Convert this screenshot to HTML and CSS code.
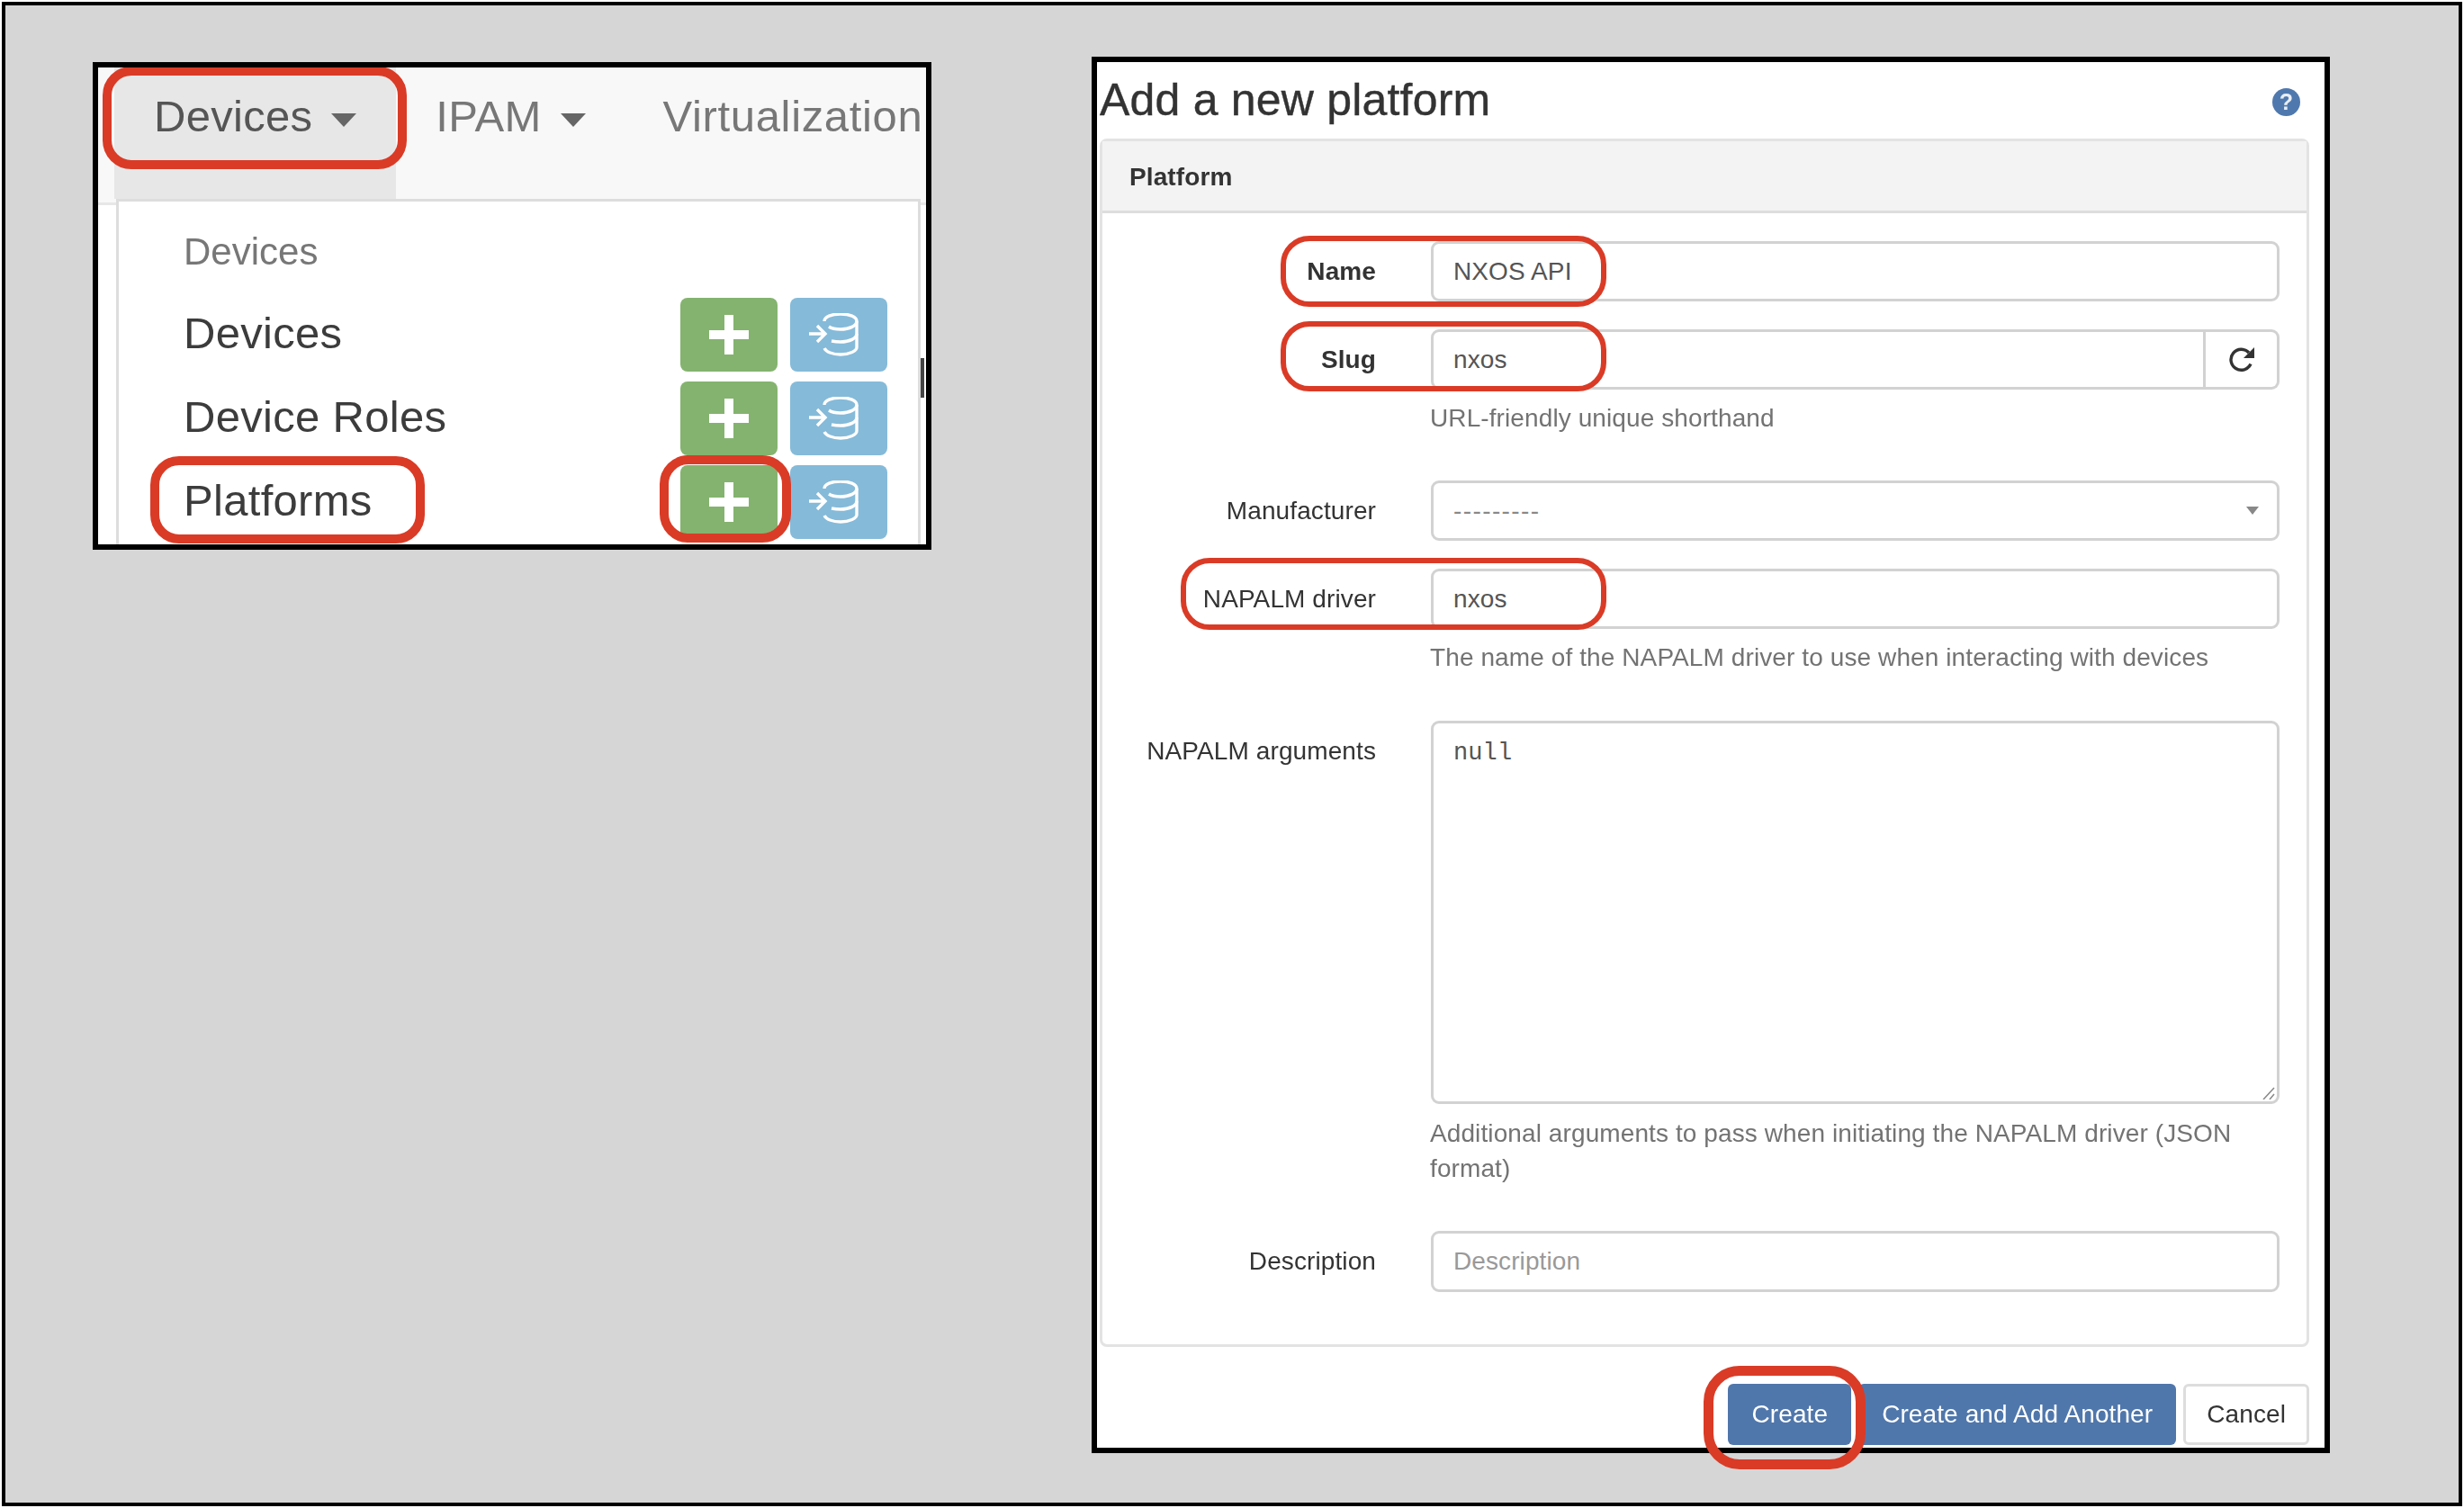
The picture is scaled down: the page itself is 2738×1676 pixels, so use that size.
FILE: index.html
```html
<!DOCTYPE html>
<html>
<head>
  <title>Add a new platform</title>
  <link rel="stylesheet" href="styles.css">
</head>
<body>
  <div class="frame">

    <!-- left shot: nav menu -->
    <div class="shot shot-nav">
      <div class="navbar">
        <div class="nav-item active">Devices <span class="caret"></span></div>
        <div class="nav-item">IPAM <span class="caret"></span></div>
        <div class="nav-item nav-virt">Virtualization</div>
      </div>
      <div class="menu">
        <div class="menu-header">Devices</div>
        <div class="menu-row">
          <span class="menu-label">Devices</span>
          <div class="menu-btns">
            <span class="btn-add"><svg width="44" height="44" viewBox="0 0 44 44"><path d="M17 0h10v17h17v10H27v17H17V27H0V17h17z" fill="#fff"/></svg></span>
            <span class="btn-import"><svg width="56" height="48" viewBox="0 0 56 48" fill="none" stroke="#fff" stroke-width="3.4"><path d="M17 9c0-5 8-8 18-8s18 3 18 8-8 9-18 9c-5 0-10-1-13-3"/><path d="M53 9v29c0 4-8 8-18 8-9 0-16-3-18-7"/><path d="M53 23c0 5-8 9-18 9-4 0-7-.4-10-1"/><path d="M0 23h18M9 14l9 9-9 9"/></svg></span>
          </div>
        </div>
        <div class="menu-row">
          <span class="menu-label">Device Roles</span>
          <div class="menu-btns">
            <span class="btn-add"><svg width="44" height="44" viewBox="0 0 44 44"><path d="M17 0h10v17h17v10H27v17H17V27H0V17h17z" fill="#fff"/></svg></span>
            <span class="btn-import"><svg width="56" height="48" viewBox="0 0 56 48" fill="none" stroke="#fff" stroke-width="3.4"><path d="M17 9c0-5 8-8 18-8s18 3 18 8-8 9-18 9c-5 0-10-1-13-3"/><path d="M53 9v29c0 4-8 8-18 8-9 0-16-3-18-7"/><path d="M53 23c0 5-8 9-18 9-4 0-7-.4-10-1"/><path d="M0 23h18M9 14l9 9-9 9"/></svg></span>
          </div>
        </div>
        <div class="menu-row">
          <span class="menu-label">Platforms</span>
          <div class="menu-btns">
            <span class="btn-add"><svg width="44" height="44" viewBox="0 0 44 44"><path d="M17 0h10v17h17v10H27v17H17V27H0V17h17z" fill="#fff"/></svg></span>
            <span class="btn-import"><svg width="56" height="48" viewBox="0 0 56 48" fill="none" stroke="#fff" stroke-width="3.4"><path d="M17 9c0-5 8-8 18-8s18 3 18 8-8 9-18 9c-5 0-10-1-13-3"/><path d="M53 9v29c0 4-8 8-18 8-9 0-16-3-18-7"/><path d="M53 23c0 5-8 9-18 9-4 0-7-.4-10-1"/><path d="M0 23h18M9 14l9 9-9 9"/></svg></span>
          </div>
        </div>
      </div>
      <div class="sliver"></div>
      <div class="ring ring-devices"></div>
      <div class="ring ring-platforms"></div>
      <div class="ring ring-plus"></div>
    </div>

    <!-- right shot: the form -->
    <div class="shot shot-form">
      <div class="title-row">
        <h1>Add a new platform</h1>
        <span class="help-icon">?</span>
      </div>

      <div class="card">
        <div class="card-header">Platform</div>
        <div class="card-body">
          <div class="form-row row-name">
            <div class="label strong">Name</div>
            <div class="control">NXOS API</div>
          </div>
          <div class="form-row row-slug">
            <div class="label strong">Slug</div>
            <div class="input-group">
              <div class="control">nxos</div>
              <div class="group-btn">
                <svg width="30" height="30" viewBox="0 0 30 30" fill="none"><path d="M25 19.5A11.5 11.5 0 1 1 23 7" stroke="#333" stroke-width="3.4"/><path d="M29 1v12H17z" fill="#333"/></svg>
              </div>
            </div>
            <div class="help-text slug-help">URL-friendly unique shorthand</div>
          </div>
          <div class="form-row row-manu">
            <div class="label">Manufacturer</div>
            <div class="control select"><span class="muted">---------</span><span class="select-caret"></span></div>
          </div>
          <div class="form-row row-driver">
            <div class="label">NAPALM driver</div>
            <div class="control">nxos</div>
            <div class="help-text driver-help">The name of the NAPALM driver to use when interacting with devices</div>
          </div>
          <div class="form-row row-args">
            <div class="label">NAPALM arguments</div>
            <div class="control textarea">null
              <svg class="grip" width="14" height="14" viewBox="0 0 14 14" stroke="#888" stroke-width="1.5"><path d="M1 14L13 1M8 14l5-6"/></svg>
            </div>
            <div class="help-text args-help">Additional arguments to pass when initiating the NAPALM driver (JSON format)</div>
          </div>
          <div class="form-row">
            <div class="label">Description</div>
            <div class="control placeholder">Description</div>
          </div>
        </div>
      </div>

      <div class="form-buttons">
        <span class="btn btn-primary">Create</span>
        <span class="btn btn-primary">Create and Add Another</span>
        <span class="btn btn-default">Cancel</span>
      </div>

      <div class="ring ring-name"></div>
      <div class="ring ring-slug"></div>
      <div class="ring ring-driver"></div>
      <div class="ring ring-create"></div>
    </div>

  </div>
</body>
</html>
```

FILE: styles.css
```css
* {
  box-sizing: border-box;
}

body {
  margin: 0;
  background: #fff;
  font-family: "Liberation Sans", Arial, sans-serif;
  color: #333;
}

.frame {
  display: flex;
  align-items: flex-start;
  width: 2734px;
  height: 1672px;
  margin: 2px;
  padding: 57px 0 0 97px;
  border: 4px solid #000;
  background: #d6d6d6;
}

.shot {
  position: relative;
  border: 6px solid #000;
  background: #fff;
}

/* left shot */
.shot-nav {
  width: 932px;
  height: 542px;
  margin-top: 6px;
  overflow: hidden;
}

.navbar {
  display: flex;
  height: 153px;
  padding-left: 18px;
  background: #f8f8f8;
  border-bottom: 3px solid #e7e7e7;
  font-size: 49px;
  letter-spacing: .3px;
  color: #777;
  white-space: nowrap;
  filter: blur(.7px);
}

.nav-item {
  height: 146px;
  padding: 26px 43px 0 44px;
  line-height: 56px;
}

.nav-item.active {
  padding-right: 44px;
  background: #e7e7e7;
  color: #555;
}

.nav-virt {
  padding-left: 43px;
  padding-right: 0;
  letter-spacing: .65px;
}

.caret {
  display: inline-block;
  margin-left: 7px;
  vertical-align: middle;
  border-top: 15px solid #666;
  border-left: 14px solid transparent;
  border-right: 14px solid transparent;
}

.menu {
  position: absolute;
  top: 146px;
  left: 20px;
  right: 6px;
  height: 420px;
  padding: 0 34px 0 72px;
  background: #fff;
  border: 3px solid #ddd;
  filter: blur(.7px);
}

.menu-header {
  margin: 31px 0 20px;
  font-size: 42px;
  line-height: 50px;
  color: #777;
}

.menu-row {
  display: flex;
  justify-content: space-between;
  align-items: center;
  height: 93px;
  font-size: 49px;
  letter-spacing: .3px;
}

.menu-label {
  padding-bottom: 4px;
  color: #3c3c3c;
}

.menu-btns {
  display: flex;
  gap: 14px;
}

.btn-add,
.btn-import {
  display: flex;
  justify-content: center;
  align-items: center;
  width: 108px;
  height: 82px;
  border-radius: 8px;
}

.btn-add {
  background: #84b36f;
}

.btn-import {
  background: #85bad9;
}

.btn-import svg {
  margin-right: 10px;
}

.sliver {
  position: absolute;
  top: 323px;
  right: 2px;
  width: 4px;
  height: 44px;
  background: #444;
}

/* red markers */
.ring {
  position: absolute;
  border: 6px solid #da3b26;
  border-radius: 32px;
}

.ring-devices {
  top: -1px;
  left: 5px;
  width: 338px;
  height: 114px;
  border-width: 10px;
}

.ring-platforms {
  top: 432px;
  left: 58px;
  width: 305px;
  height: 97px;
  border-width: 10px;
}

.ring-plus {
  top: 431px;
  left: 624px;
  width: 146px;
  height: 97px;
  border-width: 10px;
}

.ring-name {
  top: 193px;
  left: 204px;
  width: 362px;
  height: 79px;
}

.ring-slug {
  top: 288px;
  left: 204px;
  width: 362px;
  height: 78px;
}

.ring-driver {
  top: 551px;
  left: 93px;
  width: 473px;
  height: 80px;
}

.ring-create {
  top: 1449px;
  left: 674px;
  width: 180px;
  height: 115px;
  border-width: 11px;
  border-radius: 40px;
}

/* right shot */
.shot-form {
  width: 1376px;
  height: 1552px;
  margin-left: 178px;
  font-size: 28px;
  letter-spacing: .1px;
}

.title-row {
  display: flex;
  justify-content: space-between;
  align-items: center;
  height: 85px;
  padding: 0 27px 0 3px;
  filter: blur(.4px);
}

h1 {
  margin: 0;
  font-size: 50px;
  font-weight: 400;
  letter-spacing: .2px;
  line-height: 83px;
  -webkit-text-stroke: .4px #333;
}

.help-icon {
  width: 31px;
  height: 31px;
  margin-top: 4px;
  border-radius: 50%;
  background: #4f79ae;
  color: #e8eef6;
  font-size: 25px;
  font-weight: 700;
  line-height: 31px;
  text-align: center;
}

.card {
  width: 1344px;
  height: 1343px;
  margin-left: 3px;
  border: 3px solid #e3e3e3;
  border-radius: 8px;
  filter: blur(.4px);
}

.card-header {
  height: 80px;
  padding: 3px 0 0 30px;
  background: #f3f3f3;
  border-bottom: 3px solid #ddd;
  font-weight: 700;
  line-height: 74px;
}

.card-body {
  padding-top: 31px;
}

.form-row {
  display: grid;
  grid-template-columns: 304px 943px;
  column-gap: 61px;
}

.row-name,
.row-manu {
  margin-bottom: 31px;
}

.row-slug {
  margin-bottom: 50px;
}

.row-driver {
  margin-bottom: 51px;
}

.row-args {
  margin-bottom: 50px;
}

.label {
  height: 67px;
  line-height: 68px;
  text-align: right;
}

.label.strong {
  font-weight: 700;
}

.control {
  position: relative;
  height: 67px;
  padding: 0 22px;
  background: #fff;
  border: 3px solid #d2d2d2;
  border-radius: 9px;
  color: #555;
  line-height: 61px;
}

.input-group {
  display: flex;
}

.input-group .control {
  flex: 1;
  border-radius: 9px 0 0 9px;
}

.group-btn {
  display: flex;
  justify-content: center;
  align-items: center;
  width: 82px;
  height: 67px;
  border: 3px solid #d2d2d2;
  border-left: 0;
  border-radius: 0 9px 9px 0;
}

.select {
  display: flex;
  justify-content: space-between;
  align-items: center;
}

.muted {
  color: #888;
  letter-spacing: 1.4px;
}

.select-caret {
  margin-right: -2px;
  border-top: 9px solid #888;
  border-left: 7.5px solid transparent;
  border-right: 7.5px solid transparent;
}

.textarea {
  height: 426px;
  padding-top: 3px;
  font-family: "Liberation Mono", "Courier New", monospace;
  font-size: 27px;
}

.grip {
  position: absolute;
  right: 2px;
  bottom: 2px;
}

.placeholder {
  height: 68px;
  color: #999;
}

.help-text {
  grid-column: 2;
  margin-left: -1px;
  color: #737373;
  line-height: 39px;
}

.slug-help {
  margin-top: 12px;
}

.driver-help {
  margin-top: 12px;
}

.args-help {
  margin-top: 13px;
}

.form-buttons {
  display: flex;
  justify-content: flex-end;
  gap: 8px;
  width: 1347px;
  margin-top: 41px;
  filter: blur(.4px);
}

.btn {
  height: 68px;
  padding: 0 23px;
  border: 3px solid transparent;
  border-radius: 6px;
  line-height: 62px;
}

.btn-primary {
  background: #5077ab;
  color: #fff;
}

.btn-default {
  background: #fff;
  border-color: #ddd;
}
```
